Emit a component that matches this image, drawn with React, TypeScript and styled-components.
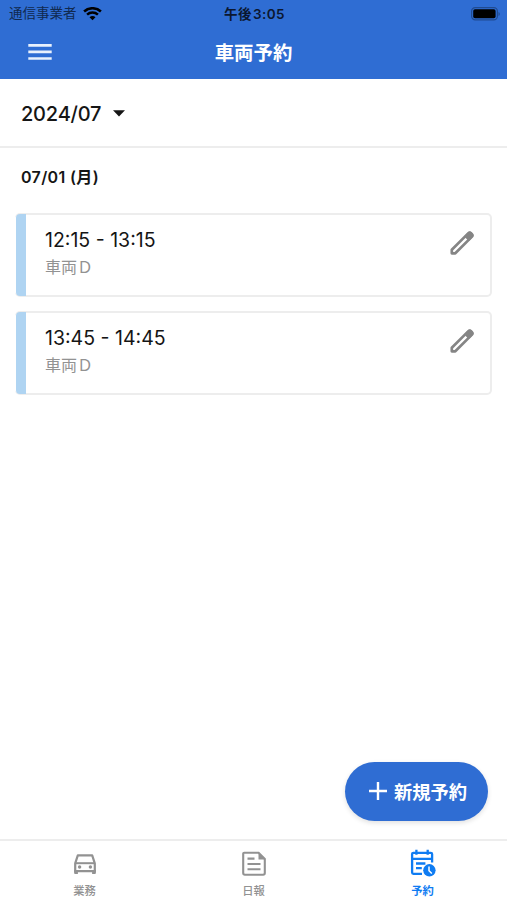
import React from "react";
import styled, { createGlobalStyle } from "styled-components";

const GlobalStyle = createGlobalStyle`
  * { box-sizing: border-box; }
  body {
    margin: 0;
    background: #fff;
    font-family: Inter, "Noto Sans CJK JP", sans-serif;
    color: #151515;
  }
  button { font: inherit; border: 0; padding: 0; background: none; }
  svg { display: block; }
`;

const Screen = styled.div`
  position: relative;
  display: flex;
  flex-direction: column;
  width: 507px;
  height: 900px;
  overflow: hidden;
`;

const Header = styled.header`
  height: 79px;
  background: #2f6dd3;
`;

const StatusBar = styled.div`
  display: grid;
  grid-template-columns: 1fr auto 1fr;
  align-items: center;
  height: 27px;
  padding: 0 7px 0 9px;
  color: #0b1730;
`;

const Carrier = styled.div`
  display: flex;
  align-items: center;
  gap: 6px;
  font-size: 13.5px;
  line-height: 27px;
  color: #10294f;
`;

const Clock = styled.div`
  padding-top: 1px;
  font-size: 13.5px;
  font-weight: 600;
  line-height: 26px;
  letter-spacing: 0.4px;
  word-spacing: -2.5px;
`;

const BatterySlot = styled.div`
  justify-self: end;
`;

const NavBar = styled.div`
  display: grid;
  grid-template-columns: 80px 1fr 80px;
  align-items: center;
  height: 52px;
`;

const MenuButton = styled.button`
  display: flex;
  justify-content: center;
  margin-top: -2px;
`;

const Title = styled.h1`
  margin: 0;
  text-align: center;
  color: #fff;
  font-size: 19.4px;
  line-height: 50px;
  font-weight: 700;
`;

const MonthBar = styled.button`
  display: flex;
  align-items: center;
  gap: 12px;
  height: 69px;
  padding: 2px 21px 0;
  border-bottom: 2px solid #ededed;
  color: #151515;
  font-size: 20px;
  font-weight: 500;
  letter-spacing: -0.2px;
`;

const Schedule = styled.main`
  flex: 1;
  padding: 14px 15px 0;
`;

const DayLabel = styled.h2`
  margin: 0 0 21px 6px;
  font-size: 16px;
  line-height: 30px;
  font-weight: 600;
  letter-spacing: 0.35px;
`;

const CardList = styled.div`
  display: flex;
  flex-direction: column;
  gap: 14px;
`;

const Card = styled.article`
  display: flex;
  height: 84px;
  border: 2px solid #ededed;
  border-left: 0;
  border-radius: 5px;
`;

const CardAccent = styled.div`
  width: 10px;
  margin: -1px 0;
  margin-left: 1px;
  background: #afd4f2;
  border-radius: 4px 0 0 4px;
`;

const CardBody = styled.div`
  flex: 1;
  padding: 12px 0 0 19px;
`;

const TimeRange = styled.div`
  font-size: 19.5px;
  line-height: 27px;
`;

const Vehicle = styled.div`
  color: #929292;
  font-size: 16px;
  line-height: 27px;
`;

const EditButton = styled.button`
  align-self: flex-start;
  margin: 12px 12px 0 0;
`;

const CreateButton = styled.button`
  position: absolute;
  right: 19px;
  bottom: 79px;
  display: flex;
  align-items: center;
  gap: 7px;
  width: 143px;
  height: 59px;
  padding: 0 0 1px 24px;
  border-radius: 30px;
  background: #2f6dd3;
  box-shadow: 0 2px 5px rgba(0, 0, 0, 0.12);
  color: #fff;
  font-size: 18.3px;
  font-weight: 600;
  white-space: nowrap;
`;

const TabBar = styled.nav`
  display: grid;
  grid-template-columns: repeat(3, 1fr);
  height: 61px;
  border-top: 2px solid #ededed;
`;

const Tab = styled.button<{ $active?: boolean }>`
  display: flex;
  flex-direction: column;
  align-items: center;
  padding-top: 8px;
  color: ${(p) => (p.$active ? "#0f7cf2" : "#929292")};
  font-size: 11.3px;
  font-weight: ${(p) => (p.$active ? 700 : 500)};
  line-height: 16px;
  gap: 4px;
`;

const WifiIcon = () => (
  <svg width="19" height="14" viewBox="0 0 19 14" fill="none" stroke="#000" strokeWidth="2.5">
    <path d="M1.1 4.5C5.8.1 13.2.1 17.9 4.5" />
    <path d="M4.1 7.6c3-2.8 7.8-2.8 10.8 0" />
    <path d="M9.5 13.2 6.5 10.3c1.7-1.6 4.3-1.6 6 0Z" fill="#000" stroke="none" />
  </svg>
);

const BatteryIcon = () => (
  <svg width="29" height="14" viewBox="0 0 29 14">
    <rect x=".6" y=".6" width="25.8" height="12.2" rx="3.6" fill="none" stroke="#204b91" strokeWidth="1.2" />
    <rect x="2.2" y="2.2" width="22.4" height="9" rx="1.8" fill="#000" />
    <path d="M27.5 5v4q1.3-.5 1.3-2t-1.3-2Z" fill="#204b91" />
  </svg>
);

const MenuIcon = () => (
  <svg width="24" height="18" viewBox="0 0 24 18" stroke="#e9f1fd" strokeWidth="2.7">
    <path d="M.3 2.3h23.4M.3 8.9h23.4M.3 15.5h23.4" />
  </svg>
);

const CaretIcon = () => (
  <svg width="12" height="7" viewBox="0 0 12 7">
    <path d="M0 .3h12L6 6.5Z" fill="#151515" />
  </svg>
);

const PencilIcon = () => (
  <svg width="32" height="32" viewBox="0 0 32 32" fill="none" stroke="#858585" strokeWidth="2.7" strokeLinejoin="round">
    <path d="M5.8 22.8 22.2 6.4q1.5-1.5 3 0l.5.5q1.5 1.5 0 3L9.3 26.3H5.8Z" />
    <path d="m19.3 9.3 3-3q1.5-1.5 3 0l.5.5q1.5 1.5 0 3l-3 3Z" fill="#858585" strokeWidth="1.8" />
  </svg>
);

const PlusIcon = () => (
  <svg width="18" height="18" viewBox="0 0 18 18" stroke="#fff" strokeWidth="2.4">
    <path d="M0 9h18M9 0v18" />
  </svg>
);

const CarIcon = () => (
  <svg width="28" height="30" viewBox="0 0 28 30">
    <path d="M4.2 14.3 6.8 6.4H21.2l2.6 7.9v7.9H4.2Z" fill="none" stroke="currentColor" strokeWidth="2.2" strokeLinejoin="round" />
    <path d="M4.2 14.2h19.6" stroke="currentColor" strokeWidth="2" />
    <path d="M3.1 21h3.8v4.1H4.2q-1.1 0-1.1-1ZM21.1 21h3.8v3.1q0 1-1.1 1h-2.7Z" fill="currentColor" />
    <circle cx="8.6" cy="18" r="1.7" fill="currentColor" />
    <circle cx="19.4" cy="18" r="1.7" fill="currentColor" />
  </svg>
);

const ReportIcon = () => (
  <svg width="28" height="30" viewBox="0 0 28 30" fill="none" stroke="currentColor" strokeWidth="2.1">
    <path d="M4.2 3.8h14.4l6.2 6.2v14q0 1.7-1.7 1.7H4.9q-1.7 0-1.7-1.7V4.8q0-1 1-1Z" />
    <path d="M18.5 3.5V10.5h6.8Z" fill="currentColor" stroke="none" />
    <path d="M7.5 9.6h7M7.5 15h13M7.5 20.3h13" />
  </svg>
);

const ReservationIcon = () => (
  <svg width="28" height="30" viewBox="0 0 28 30" fill="none" stroke="currentColor" strokeWidth="2.3">
    <path d="M13 24.9H4.4q-1.3 0-1.3-1.3V5.1q0-1.3 1.3-1.3h17.4q1.3 0 1.3 1.3v8.4" />
    <path d="M3 9.9h20.2M7.4.8v5M18.7.8v5M7 14.5h9.4M7 19.2h5.8" />
    <circle cx="20.4" cy="21.3" r="6.2" fill="currentColor" stroke="none" />
    <path d="M20 17.4v4.3l2.8 2.8" stroke="#fff" strokeWidth="1.5" />
  </svg>
);

const reservations = [
  { time: "12:15 - 13:15", vehicle: "車両Ｄ" },
  { time: "13:45 - 14:45", vehicle: "車両Ｄ" },
];

export default function App() {
  return (
    <Screen lang="ja">
      <GlobalStyle />
      <Header>
        <StatusBar>
          <Carrier>通信事業者<WifiIcon /></Carrier>
          <Clock>午後 3:05</Clock>
          <BatterySlot><BatteryIcon /></BatterySlot>
        </StatusBar>
        <NavBar>
          <MenuButton aria-label="メニュー"><MenuIcon /></MenuButton>
          <Title>車両予約</Title>
        </NavBar>
      </Header>
      <MonthBar>2024/07<CaretIcon /></MonthBar>
      <Schedule>
        <DayLabel>07/01 (月)</DayLabel>
        <CardList>
          {reservations.map((r) => (
            <Card key={r.time}>
              <CardAccent />
              <CardBody>
                <TimeRange>{r.time}</TimeRange>
                <Vehicle>{r.vehicle}</Vehicle>
              </CardBody>
              <EditButton aria-label="編集"><PencilIcon /></EditButton>
            </Card>
          ))}
        </CardList>
      </Schedule>
      <CreateButton><PlusIcon />新規予約</CreateButton>
      <TabBar>
        <Tab><CarIcon />業務</Tab>
        <Tab><ReportIcon />日報</Tab>
        <Tab $active><ReservationIcon />予約</Tab>
      </TabBar>
    </Screen>
  );
}
